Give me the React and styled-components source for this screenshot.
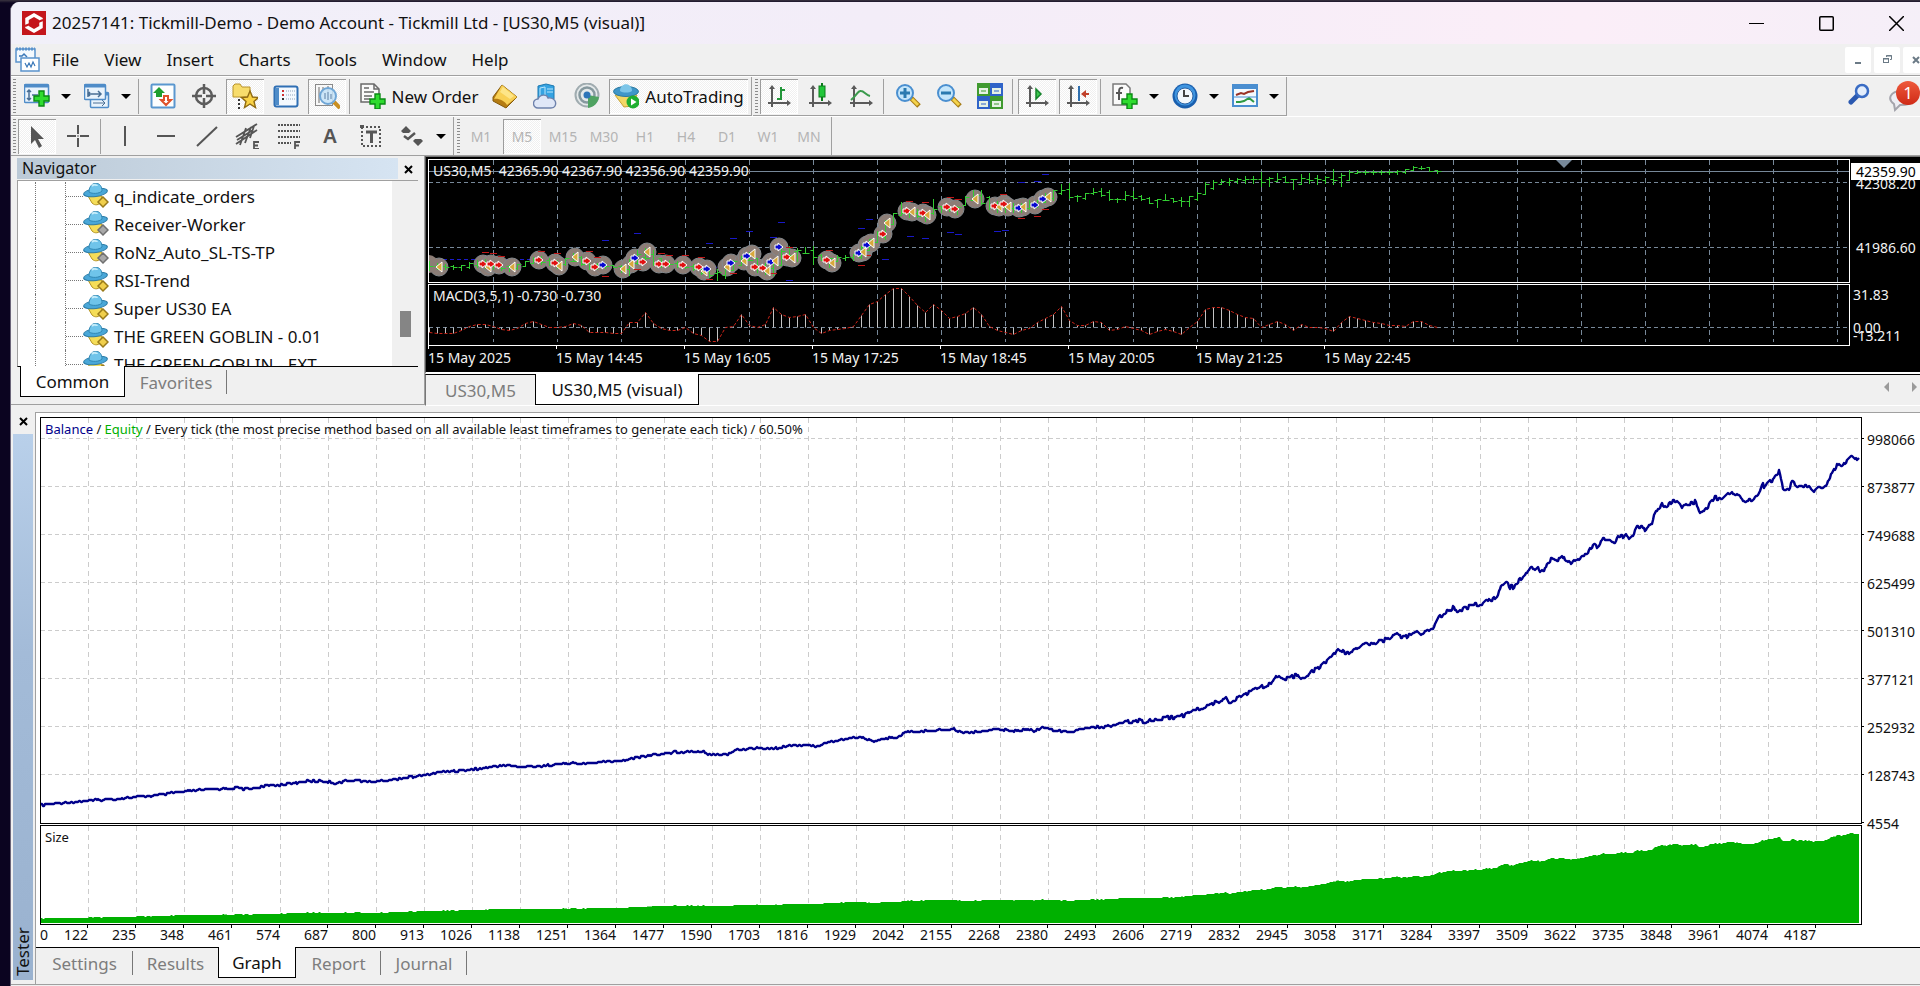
import React from 'react';
import styled, { createGlobalStyle, css } from 'styled-components';

const GlobalStyle = createGlobalStyle`
  * {
    box-sizing: border-box;
  }

  body {
    margin: 0;
    background: #0b0420;
    overflow: hidden;
  }

  button {
    font: inherit;
    color: inherit;
    border: 0;
    padding: 0;
    background: none;
  }
`;

/* ---------- data ---------- */

const menus = ['File', 'View', 'Insert', 'Charts', 'Tools', 'Window', 'Help'];
const timeframes = ['M1', 'M5', 'M15', 'M30', 'H1', 'H4', 'D1', 'W1', 'MN'];

const experts = [
  { name: 'q_indicate_orders', active: true },
  { name: 'Receiver-Worker', active: false },
  { name: 'RoNz_Auto_SL-TS-TP', active: false },
  { name: 'RSI-Trend', active: true },
  { name: 'Super US30 EA', active: true },
  { name: 'THE GREEN GOBLIN - 0.01', active: true },
  { name: 'THE GREEN GOBLIN - EXT', active: true },
];

const dates = [
  '15 May 2025',
  '15 May 14:45',
  '15 May 16:05',
  '15 May 17:25',
  '15 May 18:45',
  '15 May 20:05',
  '15 May 21:25',
  '15 May 22:45',
];

const tradeNumbers = [
  122, 235, 348, 461, 574, 687, 800, 913, 1026, 1138, 1251, 1364, 1477, 1590, 1703, 1816, 1929,
  2042, 2155, 2268, 2380, 2493, 2606, 2719, 2832, 2945, 3058, 3171, 3284, 3397, 3509, 3622, 3735,
  3848, 3961, 4074, 4187,
];

const balances = [998066, 873877, 749688, 625499, 501310, 377121, 252932, 128743, 4554];

// high / low of every bar, three units to a pixel
const bars = [
  [335, 360], [340, 356], [342, 356], [346, 356], [346, 358], [336, 352], [330, 350], [328, 352],
  [336, 356], [340, 358], [345, 362], [342, 356], [333, 348], [322, 338], [318, 342], [326, 345],
  [330, 352], [325, 345], [310, 332], [320, 345], [328, 356], [340, 356], [340, 352], [346, 350],
  [346, 366], [328, 375], [300, 340], [296, 330], [300, 345], [325, 350], [330, 348], [335, 350],
  [340, 354], [344, 358], [350, 372], [355, 380], [357, 390], [350, 382], [332, 360], [318, 345],
  [306, 330], [325, 365], [340, 370], [330, 375], [285, 345], [288, 320], [296, 332], [291, 308],
  [290, 340], [312, 330], [325, 350], [315, 332], [315, 328], [312, 330], [290, 322], [268, 300],
  [245, 275], [210, 265], [190, 222], [158, 195], [178, 200], [178, 200], [185, 212], [148, 190],
  [168, 185], [165, 182], [170, 190], [140, 165], [120, 150], [120, 160], [140, 175], [155, 185],
  [165, 185], [160, 185], [160, 185], [150, 175], [150, 170], [130, 155], [120, 150], [102, 130],
  [100, 142], [137, 152], [130, 146], [116, 130], [116, 136], [121, 148], [146, 154], [125, 148],
  [123, 144], [137, 148], [142, 158], [148, 170], [132, 150], [144, 154], [142, 166], [139, 166],
  [128, 148], [97, 132], [90, 116], [87, 102], [84, 104], [84, 97], [78, 97], [79, 97], [67, 106],
  [83, 108], [70, 92], [79, 95], [88, 116], [72, 101], [70, 97], [76, 101], [78, 97], [58, 101],
  [70, 108], [60, 90], [62, 68], [62, 70], [62, 70], [62, 70], [62, 70], [62, 70], [57, 67],
  [50, 60], [48, 55], [52, 62], [60, 68],
];

const macd = [
  -16, -17, -17, -17, -10, 2, 8, 8, 2, -5, -8, -4, 12, 18, 10, 0, 0, 3, 12, 6, -15, -16, -15, -17,
  -18, 15, 14, 44, 12, -2, -8, -10, 0, -17, -24, -43, -43, 0, 2, 40, 5, 0, 8, 60, 38, 30, 32, 38, 0,
  -17, -8, -6, -4, 4, 36, 68, 77, 98, 117, 117, 92, 66, 44, 68, 50, 28, 32, 42, 60, 38, 2, -10, -16,
  -22, -10, -4, 14, 26, 40, 62, 22, 6, 6, 17, 14, -8, -6, 3, -2, -10, -20, -12, -6, -12, -22, 0, 18,
  54, 60, 60, 50, 40, 30, 26, 0, 8, 17, 8, -8, 8, 0, 0, -4, -12, 15, 32, 26, 22, 14, 12, 6, 5, 4,
  17, 17, 6, 0,
];

// t: trade closed, s: sell, b: buy
const trades = [
  ['t', 11, 108], ['s', 55, 105], ['t', 60, 108], ['s', 63, 105], ['s', 71, 106], ['t', 84, 108],
  ['s', 111, 101], ['s', 127, 104], ['t', 131, 107], ['t', 147, 98], ['s', 159, 102],
  ['s', 167, 108], ['b', 175, 106], ['t', 195, 110], ['t', 203, 105], ['b', 207, 99],
  ['s', 215, 103], ['t', 219, 93], ['s', 231, 105], ['s', 238, 105], ['s', 255, 106],
  ['s', 271, 108], ['t', 276, 112], ['b', 279, 110], ['t', 299, 108], ['b', 303, 104],
  ['t', 316, 102], ['b', 319, 97], ['t', 324, 95], ['s', 327, 108], ['s', 335, 109],
  ['t', 339, 112], ['b', 343, 103], ['t', 347, 102], ['b', 351, 88], ['s', 359, 98],
  ['t', 364, 99], ['s', 399, 101], ['t', 404, 104], ['b', 431, 94], ['t', 435, 93],
  ['b', 439, 86], ['t', 443, 84], ['s', 455, 75], ['t', 459, 64], ['s', 479, 52], ['t', 484, 53],
  ['s', 495, 54], ['t', 499, 56], ['s', 519, 48], ['s', 527, 50], ['t', 547, 40], ['s', 567, 47],
  ['t', 571, 48], ['s', 576, 45], ['t', 580, 48], ['b', 591, 49], ['t', 595, 48], ['b', 607, 46],
  ['b', 615, 40], ['t', 620, 38],
];

const buyStops = [
  [177, 81], [209, 74], [281, 84], [305, 79], [321, 72], [345, 78], [353, 63], [433, 69],
  [441, 60], [457, 100], [482, 77], [361, 121], [497, 79], [522, 73], [530, 75], [569, 72],
  [577, 71], [593, 23], [609, 22], [617, 15],
];

const sellStops = [
  [57, 93], [65, 94], [73, 97], [113, 92], [129, 94], [161, 92], [169, 98], [177, 117],
  [209, 110], [233, 94], [241, 96], [257, 96], [273, 98], [281, 120], [305, 114], [345, 114],
  [361, 88], [401, 91], [433, 106], [439, 96], [481, 42], [497, 43], [522, 38], [530, 40],
  [575, 35], [593, 59], [609, 57], [617, 50],
];

const balanceKnots = [
  [0, 388], [19, 386], [46, 384], [72, 382], [96, 380], [119, 378], [132, 376], [159, 373],
  [192, 371], [207, 372], [232, 368], [249, 367], [266, 364], [282, 364], [294, 366], [312, 363],
  [329, 365], [349, 363], [385, 358], [399, 355], [437, 352], [463, 348], [479, 350], [501, 349],
  [527, 346], [539, 347], [578, 344], [603, 339], [635, 335], [662, 334], [667, 337], [687, 337],
  [696, 333], [715, 331], [731, 332], [750, 328], [775, 329], [798, 323], [818, 320], [833, 324],
  [855, 320], [867, 315], [913, 312], [917, 315], [935, 315], [954, 312], [973, 314], [989, 312],
  [994, 314], [1001, 310], [1011, 313], [1033, 315], [1043, 311], [1063, 310], [1100, 303],
  [1107, 305], [1120, 301], [1139, 300], [1155, 292], [1161, 293], [1174, 285], [1186, 281],
  [1188, 285], [1200, 279], [1216, 271], [1230, 267], [1235, 259], [1242, 264], [1257, 257],
  [1260, 261], [1279, 250], [1292, 238], [1297, 232], [1304, 236], [1311, 234], [1322, 226],
  [1327, 228], [1346, 222], [1355, 217], [1364, 220], [1376, 215], [1380, 218], [1384, 215],
  [1392, 210], [1397, 201], [1406, 194], [1412, 191], [1418, 194], [1431, 188], [1441, 187],
  [1446, 182], [1449, 184], [1455, 181], [1460, 170], [1465, 165], [1469, 170], [1472, 170],
  [1481, 161], [1489, 150], [1494, 153], [1497, 151], [1499, 155], [1504, 152], [1509, 143],
  [1517, 143], [1523, 139], [1526, 144], [1530, 148], [1541, 138], [1546, 137], [1553, 128],
  [1556, 131], [1562, 123], [1569, 123], [1573, 128], [1577, 121], [1586, 117], [1588, 120],
  [1592, 118], [1596, 110], [1604, 112], [1611, 107], [1613, 98], [1621, 86], [1625, 91],
  [1632, 84], [1638, 85], [1642, 90], [1646, 89], [1654, 85], [1659, 95], [1666, 92], [1673, 81],
  [1682, 82], [1687, 77], [1695, 76], [1701, 83], [1711, 84], [1717, 78], [1722, 66], [1723, 71],
  [1727, 65], [1734, 61], [1738, 55], [1742, 72], [1747, 73], [1752, 64], [1756, 70], [1767, 70],
  [1773, 75], [1777, 71], [1785, 70], [1789, 59], [1796, 49], [1801, 50], [1806, 44], [1810, 39],
  [1814, 42], [1817, 40],
];

const noise = (n) => {
  const v = Math.sin(n * 12.9898) * 43758.5453;
  return v - Math.floor(v) - 0.5;
};

const balanceCurve = (() => {
  const points = [];
  let k = 0;
  for (let x = 0; x <= 1818; x += 1) {
    while (k < balanceKnots.length - 2 && x > balanceKnots[k + 1][0]) k += 1;
    const [x0, y0] = balanceKnots[k];
    const [x1, y1] = balanceKnots[k + 1];
    const y = y0 + ((y1 - y0) * (x - x0)) / (x1 - x0);
    const swing = x < 1080 ? 2 : 4;
    points.push([x, Math.round(y - 1 + noise(Math.floor(x / 2)) * swing)]);
  }
  return points;
})();

const polyline = (points) => points.map((p) => p.join(',')).join(' ');
const range = (from, count, step) => Array.from({ length: count }, (_, i) => from + i * step);

/* ---------- icons ---------- */

const Svg = ({ size = 26, children }) => (
  <svg width={size} height={size} viewBox="0 0 26 26" fill="none" aria-hidden="true">
    {children}
  </svg>
);

const Plus = ({ x, y }) => (
  <path
    transform={`translate(${x} ${y})`}
    d="M5 0h5v5h5v5h-5v5H5v-5H0V5h5z"
    fill="#2fdc2f"
    stroke="#0a8a14"
    strokeWidth="1.4"
  />
);

const Pane = ({ x, y, w, h }) => (
  <g transform={`translate(${x} ${y})`}>
    <rect x=".5" y=".5" width={w} height={h} rx="1" fill="#e9f3fc" stroke="#4f8cc8" strokeWidth="1.5" />
    <rect x=".5" y=".5" width={w} height="3" fill="#4f8cc8" />
  </g>
);

const Axes = ({ children }) => (
  <Svg>
    <path d="M6 4v20M2 20h21" stroke="#5a5a5a" strokeWidth="2" />
    <path d="M6 2l-3 4h6zM25 20l-4-3v6z" fill="#5a5a5a" />
    {children}
  </Svg>
);

const Magnifier = ({ minus }) => (
  <Svg>
    <path d="M16 15l8 8" stroke="#a67c14" strokeWidth="5" />
    <path d="M17 16l6 6" stroke="#f4d34c" strokeWidth="3" />
    <circle cx="10" cy="10" r="8" fill="#c5e6fb" stroke="#4a8fd0" strokeWidth="2" />
    <path d={minus ? 'M5 10h10' : 'M5 10h10M10 5v10'} stroke="#2b7ab0" strokeWidth="3" />
  </Svg>
);

const Expert = ({ active }) => (
  <Svg>
    <path d="M5 13l4 7c3 3 7 2 9-1l1-6z" fill="#f5dd58" stroke="#b59422" />
    <ellipse cx="12.500" cy="9.500" rx="12" ry="4" transform="rotate(-8 12.500 9.500)" fill="#49a7d8" stroke="#2f7ea8" />
    <path d="M6 9c0-11 13-12 13-1-3 3-10 3-13 1z" fill="#6fc4ea" stroke="#3288b4" />
    <path d="M9 3c2-2 5-1 5 0" stroke="#c4ecfa" strokeWidth="2" />
    <path d="M20 14l5 5-5 5-5-5z" fill={active ? '#f0cf4c' : '#a8a8a8'} stroke={active ? '#9a7b1a' : '#707070'} strokeWidth="1.500" />
  </Svg>
);

const icons = {
  newChart: (
    <Svg>
      <Pane x={0} y={1} w={24} h={18} />
      <path d="M5 7v10M3 9l2-2 2 2M3 15l2 2 2-2M8 12h6" stroke="#4a6f94" strokeWidth="1.500" />
      <Plus x={10} y={8} />
    </Svg>
  ),
  profiles: (
    <Svg>
      <Pane x={6} y={9} w={18} h={15} />
      <path d="M9 20h12M18 17l3 3-3 3" stroke="#4a6f94" />
      <Pane x={0} y={1} w={21} h={15} />
      <path d="M4 6v8M4 11h13M14 8l3 3-3 3M6 9l-2 2 2 2" stroke="#4a6f94" strokeWidth="1.500" />
    </Svg>
  ),
  market: (
    <Svg>
      <rect x="1.500" y="1.500" width="23" height="23" rx="1" fill="#fdfefe" stroke="#5a97cf" strokeWidth="2" />
      <path d="M9 4l6 6h-3v4H6v-4H3z" fill="#1f9e2f" />
      <path d="M16 22l-5-5h3v-4h4v4h3z" fill="#fff" stroke="#e0522a" strokeWidth="2" />
    </Svg>
  ),
  crosshair: (
    <Svg>
      <circle cx="13" cy="13" r="8" stroke="#5c5c5c" strokeWidth="2.500" />
      <path d="M13 1v10M13 15v10M1 13h10M15 13h10" stroke="#5c5c5c" strokeWidth="2.500" />
    </Svg>
  ),
  navigator: (
    <Svg>
      <path d="M1 14V3l2-2h5l2 3h8v10z" fill="#f7dc6c" stroke="#b8922a" />
      <path d="M7 16v10" stroke="#333" strokeWidth="2" strokeDasharray="2 2" />
      <path d="M18 8l2.500 6 6 .5-4.500 4 1.500 6-5.500-3.500-5.500 3.500 1.500-6-4.500-4 6-.5z" fill="#f9d246" stroke="#8f6a12" strokeWidth="1.400" />
    </Svg>
  ),
  dataWindow: (
    <Svg>
      <rect x="1.500" y="3.500" width="23" height="20" rx="2" fill="#f4f9fe" stroke="#2f6fb4" strokeWidth="2" />
      <path d="M4 5v17" stroke="#4f8cc8" strokeWidth="4" />
      <path d="M9 8h2M9 12h2" stroke="#d03030" strokeWidth="2" />
      <path d="M9 16h2" stroke="#333" strokeWidth="2" />
      <path d="M13 8h10M13 12h10M13 16h10" stroke="#8fa4bc" strokeDasharray="1 1" />
    </Svg>
  ),
  tester: (
    <Svg>
      <rect x="1.500" y="1.500" width="17" height="21" fill="#f8f8f8" stroke="#8a8a8a" />
      <path d="M5 4v16M9 4v6M14 3v6" stroke="#6d6d6d" />
      <path d="M20 19l6 6" stroke="#c98f22" strokeWidth="4" />
      <circle cx="14" cy="13" r="8" fill="#c6e3f8" fillOpacity=".85" stroke="#6fa6d6" strokeWidth="2" />
      <path d="M11 16v-6M14 9v8M17 11v5" stroke="#5d7fa2" />
    </Svg>
  ),
  newOrder: (
    <Svg>
      <path d="M1 1h13l5 5v13H1z" fill="#fafafa" stroke="#6a6a6a" strokeWidth="1.500" />
      <path d="M14 1v5h5M4 5h5M4 9h10M4 13h8M4 16h6" stroke="#6a6a6a" strokeWidth="1.500" />
      <Plus x={10} y={11} />
    </Svg>
  ),
  editor: (
    <Svg>
      <path d="M1 14L10 2l15 12-11 11L1 18z" fill="#b57c12" stroke="#845a0c" />
      <path d="M10 2l15 12-10 8c-2-4-9-7-13-6z" fill="#f8d055" />
      <path d="M11 4l11 9-4 3L8 9z" fill="#fde588" />
    </Svg>
  ),
  vps: (
    <Svg>
      <path d="M5 3l8-2 8 2v13H5z" fill="#35a3e2" stroke="#1b77b0" />
      <path d="M7 5l5-1v11H7zM14 6h6M14 9h6" stroke="#b9e5fb" />
      <path d="M5 25a4.500 4.500 0 010-9c2-5 9-5 10-1 6-1 9 4 7 8-1 2-2 2-4 2z" fill="#dfe7f7" stroke="#6e82ac" strokeWidth="1.400" />
    </Svg>
  ),
  signals: (
    <Svg>
      <circle cx="13" cy="12" r="11.500" fill="#e4e9ea" stroke="#a0acb0" strokeWidth="2" />
      <circle cx="13" cy="12" r="7.500" stroke="#86999f" strokeWidth="2.500" />
      <path d="M14 12l11 2c-1 6-5 10-11 11z" fill="#4fa362" />
      <circle cx="13" cy="12" r="3.500" fill="#2e75b8" />
    </Svg>
  ),
  auto: (
    <Svg>
      <path d="M2 12l9 12 8-1 5-11z" fill="#f3d765" stroke="#c7a233" />
      <ellipse cx="13" cy="8.500" rx="12.500" ry="5" fill="#3f97c9" stroke="#2b789f" />
      <path d="M7 8c0-9 12-9 12 0-3 2-9 2-12 0z" fill="#7cc5e8" />
      <circle cx="20" cy="19" r="6.500" fill="#1fae30" />
      <path d="M18 15.500l5.500 3.500-5.500 3.500z" fill="#fff" />
    </Svg>
  ),
  bars: (
    <Axes>
      <path d="M11 16h4V4M15 7h4" stroke="#23963a" strokeWidth="2" />
    </Axes>
  ),
  candles: (
    <Axes>
      <path d="M15 0v18" stroke="#0b7a1b" strokeWidth="2" />
      <rect x="12" y="3" width="6" height="11" fill="#22c63a" stroke="#0b7a1b" />
    </Axes>
  ),
  line: (
    <Axes>
      <path d="M3 17c6-5 7-10 10-9 3 0 5 4 9 5" stroke="#3a9a4c" strokeWidth="2" />
    </Axes>
  ),
  zoomIn: <Magnifier />,
  zoomOut: <Magnifier minus />,
  tile: (
    <Svg>
      {[[0, 0, '#3f9a2f'], [13, 0, '#2f63c8'], [0, 13, '#2f63c8'], [13, 13, '#3f9a2f']].map(([x, y, c]) => (
        <g key={`${x}-${y}`} transform={`translate(${x} ${y})`}>
          <rect width="13" height="13" fill={c} />
          <rect x="2" y="5" width="9" height="6" fill="#e6f2e4" />
          <path d="M4 8h5" stroke={c} />
        </g>
      ))}
    </Svg>
  ),
  scroll: (
    <Axes>
      <path d="M12 6l5 5-5 5z" fill="#3cc94f" stroke="#14832a" strokeWidth="1.500" />
    </Axes>
  ),
  shift: (
    <Axes>
      <path d="M14 3v15" stroke="#2f6fae" strokeWidth="2" />
      <path d="M16 11l5-4v3h3v2h-3v3z" fill="#c1402a" />
    </Axes>
  ),
  indicators: (
    <Svg>
      <path d="M1 1h13l4 4v17H1z" fill="#fafafa" stroke="#7a7a7a" strokeWidth="1.500" />
      <path d="M11 5c-4-1-4 2-4 5v7M4 10h6" stroke="#555" strokeWidth="2" />
      <Plus x={10} y={11} />
    </Svg>
  ),
  periods: (
    <Svg>
      <circle cx="13" cy="13" r="12.500" fill="#1a5fae" />
      <circle cx="13" cy="12" r="10.500" fill="#3f95e0" />
      <circle cx="13" cy="13" r="8" fill="#f2f7fc" stroke="#2a62a4" />
      <path d="M12 7v6h5" stroke="#444" strokeWidth="2" />
    </Svg>
  ),
  templates: (
    <Svg>
      <rect x="1" y="2" width="24" height="21" fill="#f4f9fe" stroke="#4a8ed0" strokeWidth="2" />
      <path d="M1 4h24" stroke="#4a8ed0" strokeWidth="4" />
      <path d="M4 12l5-2 3 1 4-2 6-1" stroke="#9a3226" strokeWidth="2" />
      <path d="M4 19h4l4-1 5-3 5 4" stroke="#2f9a44" strokeWidth="2" />
      <path d="M2 14h22" stroke="#4a8ed0" />
    </Svg>
  ),
  cursor: (
    <Svg>
      <path d="M7 3v18l4-4 4 8 3-2-4-7h6z" fill="#555" />
    </Svg>
  ),
  cross: (
    <Svg>
      <path d="M13 2v9M13 15v9M2 13h9M15 13h9" stroke="#555" strokeWidth="2" />
      <path d="M12 13h2" stroke="#555" />
    </Svg>
  ),
  vline: (
    <Svg>
      <path d="M13 3v20" stroke="#555" strokeWidth="2" />
    </Svg>
  ),
  hline: (
    <Svg>
      <path d="M4 13h18" stroke="#555" strokeWidth="2" />
    </Svg>
  ),
  trend: (
    <Svg>
      <path d="M3 23L23 4" stroke="#555" strokeWidth="2" />
    </Svg>
  ),
  channel: (
    <Svg>
      <path d="M1 14L22 1M1 21L22 7M2 17L18 7M5 22l6-17M10 20l6-16M15 15l4-12" stroke="#555" strokeWidth="1.800" />
      <path d="M24 19h-5v7h5M19 22.500h4" stroke="#555" strokeWidth="1.800" />
    </Svg>
  ),
  fibo: (
    <Svg>
      <path d="M2 2h22M2 8h22M2 14h22M2 20h13" stroke="#555" strokeWidth="2" strokeDasharray="2 1" />
      <path d="M24 19h-5v8M19 22.500h4" stroke="#555" strokeWidth="1.800" />
    </Svg>
  ),
  label: (
    <Svg>
      <rect x="4" y="4" width="18" height="19" stroke="#555" strokeWidth="2" strokeDasharray="2 2" />
      <path d="M8 9h11M13.500 9v11" stroke="#555" strokeWidth="3" />
      <path d="M2 2h4v3H2z" fill="#555" />
    </Svg>
  ),
  arrows: (
    <Svg>
      <path d="M7 3l5 5-2 2H4L2 8zM19 23l-5-5 2-2h6l2 2z" fill="#555" />
      <path d="M5 13l4 3 7-6" stroke="#555" strokeWidth="2.500" />
    </Svg>
  ),
};

/* ---------- window ---------- */

const Desktop = styled.div`
  min-height: 100vh;
  padding: 2px 0 0 10px;
  background: linear-gradient(#3a3440, #0b0420 3px);
  font-family: 'Noto Sans', 'Open Sans', sans-serif;
  font-size: 17px;
  color: #111;
`;

const AppWindow = styled.div`
  min-height: calc(100vh - 2px);
  display: flex;
  flex-direction: column;
  border-left: 1px solid #6a6478;
  border-top-left-radius: 9px;
  background: #f0f0f0;
  overflow: hidden;
`;

const TitleBar = styled.header`
  height: 42px;
  display: flex;
  align-items: center;
  gap: 6px;
  margin-right: -8px;
  padding-left: 11px;
  background: linear-gradient(90deg, #f1f0f9, #f3edf8 45%, #fbeef8 82%, #f5eff8);
`;

const Title = styled.h1`
  flex: 1;
  margin: 0;
  font-size: 17px;
  font-weight: 400;
  line-height: 22px;
  white-space: nowrap;
`;

const WindowButton = styled.button`
  width: 64px;
  height: 40px;
  display: grid;
  place-items: center;
`;

const MenuBar = styled.nav`
  height: 32px;
  display: flex;
  align-items: center;
  padding-left: 4px;
  border-bottom: 1px solid #a0a0a0;
`;

const MenuList = styled.div`
  flex: 1;
  display: flex;
  gap: 25px;
  padding-left: 12px;
`;

const MdiButtons = styled.div`
  display: flex;
  gap: 3px;
  margin-right: -9px;
`;

const MdiButton = styled.button`
  width: 26px;
  height: 26px;
  display: grid;
  place-items: center;
  border-radius: 2px;
  background: #fff;
`;

const ToolbarRow = styled.div`
  height: 40px;
  display: flex;
  border-top: 1px solid #fff;
  border-bottom: ${({ $last }) => ($last ? '1px solid #a0a0a0' : '0')};
`;

const ToolGroup = styled.div`
  display: flex;
  align-items: center;
  gap: 3px;
  padding: 0 3px 0 2px;
  margin-right: 1px;
  border-right: 1px solid #a0a0a0;
  border-bottom: ${({ $last }) => ($last ? '0' : '1px solid #a0a0a0')};
`;

const Gripper = styled.span`
  width: 3px;
  height: 34px;
  margin-right: -1px;
  background: repeating-linear-gradient(#8c8c8c 0 1px, #f0f0f0 1px 3px);
`;

const Separator = styled.span`
  width: 3px;
  height: 35px;
  border-left: 1px solid #a0a0a0;
`;

const hatch = css`
  background: repeating-conic-gradient(#fff 0 25%, #f0f0f0 0 50%) 0 0 / 2px 2px;
  box-shadow: inset 1px 1px #9c9c9c, inset -1px -1px #fff;
`;

const ToolButton = styled.button`
  width: ${({ $width }) => $width || 38}px;
  height: 35px;
  display: flex;
  align-items: center;
  justify-content: center;
  gap: 6px;
  white-space: nowrap;
  ${({ $pressed }) => $pressed && hatch}
`;

const Caret = styled.button`
  width: 19px;
  height: 35px;
  margin-left: -3px;
  display: grid;
  place-items: center;

  &::before {
    content: '';
    border: 5px solid transparent;
    border-top-color: #000;
    border-bottom: 0;
  }
`;

const Timeframe = styled(ToolButton)`
  font-size: 14px;
  color: #b4b4b4;
`;

const LetterTool = styled(ToolButton)`
  font-family: 'Liberation Sans', sans-serif;
  font-size: 20px;
  font-weight: 700;
  color: #555;
`;

const ToolbarEnd = styled.div`
  margin-left: auto;
  display: flex;
  align-items: center;
  gap: 18px;
`;

const Chat = styled.button`
  position: relative;
  width: 32px;
  height: 36px;
`;

const Badge = styled.span`
  position: absolute;
  top: 2px;
  right: 0;
  width: 24px;
  height: 24px;
  border-radius: 50%;
  background: linear-gradient(#ee5a3c, #cf2a16);
  color: #fff;
  font-size: 17px;
  line-height: 24px;
  text-align: center;
`;

/* ---------- navigator ---------- */

const Workspace = styled.div`
  display: flex;
  height: 256px;
`;

const NavigatorPanel = styled.aside`
  width: 414px;
  display: flex;
  flex-direction: column;
  padding: 2px 6px 7px 6px;
  border-right: 1px solid #a0a0a0;
  border-bottom: 1px solid #a0a0a0;
  height: 249px;
`;

const PanelHeader = styled.div`
  display: flex;
  height: 23px;
`;

const PanelTitle = styled.h2`
  flex: 1;
  margin: 0;
  padding-left: 5px;
  font-size: 16px;
  font-weight: 400;
  line-height: 20px;
  background: linear-gradient(90deg, #bccad7, #d6e4f2);
  border-bottom: 1px solid #f0f0f0;
`;

const CloseButton = styled.button`
  width: ${({ $width }) => $width}px;
  height: ${({ $height }) => $height}px;
  display: grid;
  place-items: center;
`;

const Tree = styled.div`
  display: flex;
  height: 187px;
  border-top: 1px solid #a0a0a0;
  border-left: 1px solid #a0a0a0;
  border-bottom: 1px solid #000;
  background: #fff;
`;

const TreeList = styled.ul`
  flex: 1;
  margin: 0;
  padding: 1px 0 0 17px;
  list-style: none;
  overflow: hidden;
`;

const TreeItem = styled.li`
  display: flex;
  align-items: center;
  height: 28px;
  padding-left: 29px;
  border-left: 1px dotted #777;
  white-space: nowrap;

  &::before {
    content: '';
    align-self: stretch;
    width: 17px;
    background: repeating-linear-gradient(90deg, #777 0 1px, transparent 1px 2px) 0 14px / 100% 1px no-repeat;
    border-left: 1px dotted #777;
  }

  svg {
    margin-right: 5px;
  }
`;

const ScrollTrack = styled.div`
  width: 26px;
  padding: 130px 0 0 8px;
  background: #f0f0f0;

  &::before {
    content: '';
    display: block;
    width: 11px;
    height: 26px;
    background: #858585;
  }
`;

/* ---------- tabs ---------- */

const Tabs = styled.div`
  display: flex;
  height: ${({ $height }) => $height}px;
  padding-left: ${({ $inset }) => $inset || 0}px;
`;

const Tab = styled.button`
  width: ${({ $width }) => $width}px;
  height: 30px;
  color: ${({ $active }) => ($active ? '#111' : '#7d7d7d')};
  ${({ $active }) =>
    $active
      ? css`
          margin-top: -1px;
          height: 31px;
          border: 1px solid #000;
          border-top: 0;
          background: #fff;
        `
      : css`
          background: linear-gradient(#777, #777) 100% 50% / 1px 24px no-repeat;
        `}
`;

const PlainTab = styled(Tab)`
  background: none;
`;

/* ---------- price chart ---------- */

const ChartPanel = styled.section`
  flex: 1;
  min-width: 0;
  display: flex;
  flex-direction: column;
`;

const ChartBody = styled.div`
  height: 218px;
  display: grid;
  grid-template-columns: 1fr 70px;
  grid-template-rows: 125px 62px 26px;
  padding: 2px 0 0 2px;
  background: #000;
  border-left: 1px solid #555;
  border-top: 1px solid #777;
  border-bottom: 2px solid #fff;
  color: #f2f2f2;
  font-size: 14px;
`;

const ChartPane = styled.div`
  position: relative;
  height: ${({ $height }) => $height}px;
  border: 1px solid #fff;
  overflow: hidden;

  svg {
    display: block;
  }
`;

const PaneCaption = styled.p`
  position: absolute;
  top: 1px;
  left: 4px;
  margin: 0;
  line-height: 20px;
  white-space: pre;
`;

const PriceAxis = styled.div`
  position: relative;
`;

const PriceLabel = styled.span`
  position: absolute;
  top: ${({ $top }) => $top}px;
  left: 0;
  right: 0;
  padding-left: ${({ $inset }) => $inset}px;
  line-height: 17px;
  ${({ $current }) => $current && 'background: #fff; color: #000; left: 1px; padding-left: 5px; z-index: 1;'}
`;

const DateAxis = styled.div`
  display: flex;
`;

const DateLabel = styled.span`
  flex: none;
  width: 128px;
  line-height: 24px;
  white-space: nowrap;
  background: linear-gradient(#fff, #fff) 0 0 / 1px 3px no-repeat;
`;

const ChartTabs = styled.div`
  display: flex;
  justify-content: space-between;
  height: 32px;
  border-top: 1px solid #000;
  border-bottom: 1px solid #fff;
  border-left: 1px solid #777;
`;

const Pager = styled.div`
  display: flex;
  gap: 23px;
  padding: 7px 3px 0 0;
`;

const PagerButton = styled.button`
  height: 10px;
  border: 5px solid transparent;
  border-${({ $side }) => $side}-width: 0;
  border-${({ $side }) => ($side === 'left' ? 'right' : 'left')}-color: #9a9a9a;

  &:focus-visible {
    outline: 1px dotted #000;
  }
`;

/* ---------- tester ---------- */

const Tester = styled.section`
  flex: 1;
  display: flex;
  border-bottom: 1px solid #a0a0a0;
`;

const TesterRail = styled.div`
  width: 24px;
  display: flex;
  flex-direction: column;
  padding: 0 2px 4px 2px;
`;

const RailTitle = styled.h2`
  flex: 1;
  margin: 4px 0 0;
  padding-top: 4px;
  writing-mode: vertical-rl;
  transform: rotate(180deg);
  font-size: 17px;
  font-weight: 400;
  line-height: 20px;
  background: linear-gradient(#9ab2cf, #a3bbd8 60%, #b9d0ea);
`;

const TesterContent = styled.div`
  flex: 1;
  min-width: 0;
  border-top: 1px solid #a0a0a0;
  border-left: 1px solid #a0a0a0;
`;

const Graph = styled.div`
  display: grid;
  grid-template-columns: 1fr 58px;
  padding: 4px 0 0 4px;
  background: #fff;
  border-bottom: 1px solid #000;
  font-size: 14px;
`;

const GraphPlots = styled.div`
  min-width: 0;
  display: flex;
  flex-direction: column;
  gap: 1px;
`;

const GraphPane = styled.div`
  position: relative;
  height: ${({ $height }) => $height}px;
  border: 1px solid #000;
  overflow: hidden;

  svg {
    display: block;
  }
`;

const GraphCaption = styled(PaneCaption)`
  font-size: 13px;
`;

const Colored = styled.span`
  color: ${({ $color }) => $color};
`;

const ValueAxis = styled.div`
  height: 507px;
`;

const ValueLabel = styled.div`
  display: flex;
  gap: 3px;
  height: 48px;
  line-height: 46px;

  &::before {
    content: '';
    width: 2px;
    height: 1px;
    margin-top: 21px;
    background: #000;
  }
`;

const TradeAxis = styled.div`
  display: flex;
  height: 22px;
  line-height: 20px;
`;

const TradeLabel = styled.span`
  flex: none;
  width: 48px;
  display: flex;
  justify-content: space-between;
  background: linear-gradient(#000, #000) 100% 0 / 1px 3px no-repeat;

  b {
    margin-left: auto;
    font-weight: 400;
  }
`;

const StatusEdge = styled.div`
  height: 1px;
`;

/* ---------- drawings ---------- */

const PriceChart = () => {
  const top = (v) => v / 3 - 10;
  const middle = ([high, low]) => (top(high) + top(low)) / 2;
  return (
    <svg width="100%" height="122">
      <g stroke="#778899" strokeDasharray="5 4">
        {range(64.5, 28, 64).map((x) => (
          <path key={x} d={`M${x} 0V122`} />
        ))}
        <path d="M0 22.500H4000M0 87.500H4000" strokeDasharray="4 3" />
      </g>
      <path d="M0 11.500H4000" stroke="#778899" />
      <path d="M1127 0h16l-8 8z" fill="#778899" />
      <path d="M0 99.500H142M158 106H200M270 109L300 106" stroke="#1c1ccc" strokeDasharray="4 3" />
      {trades.map(([kind, x, y]) => (
        <circle key={`${kind}${x}`} cx={x - 1} cy={y - 1} r="9" fill="#8c7d76" stroke="#83888c" />
      ))}
      <circle cx="0" cy="104" r="9" fill="#8c7d76" />
      <g stroke="#32cd32" strokeWidth="1">
        {bars.map((bar, i) => {
          const x = 0.5 + i * 8;
          const open = i ? middle(bars[i - 1]) : middle(bar);
          const high = top(bar[0]);
          const low = top(bar[1]);
          const from = Math.round(Math.min(Math.max(open, high), low)) + 0.5;
          const to = Math.round(Math.min(Math.max(middle(bars[i + 1] || bar), high), low)) + 0.5;
          return <path key={x} d={`M${x} ${Math.floor(high)}V${Math.ceil(low) + 1}M${x - 3} ${from}h3M${x} ${to}h4`} />;
        })}
      </g>
      <path
        d={buyStops.map(([x, y]) => `M${x - 4} ${y - 0.5}h7`).join('')}
        stroke="#1818c8"
      />
      <path
        d={sellStops.map(([x, y]) => `M${x - 4} ${y - 0.5}h7`).join('')}
        stroke="#c01818"
      />
      {trades.map(([kind, x, y]) =>
        kind === 't' ? (
          <path key={`${kind}${x}`} d={`M${x - 4} ${y - 1}l6-5v10z`} fill="#d8a83c" stroke="#fff" />
        ) : (
          <path
            key={`${kind}${x}`}
            d={`M${x - 5} ${y - 3}h3v-2l5 4-5 4v-2h-3z`}
            fill={kind === 's' ? '#e01010' : '#0808d0'}
            stroke="#fff"
            strokeWidth="1"
          />
        )
      )}
    </svg>
  );
};

const MacdChart = () => (
  <svg width="100%" height="60">
    <g stroke="#778899">
      {range(64.5, 28, 64).map((x) => (
        <path key={x} d={`M${x} 0V57`} strokeDasharray="5 4" />
      ))}
      <path d="M0 42.500H4000" strokeDasharray="4 3" />
    </g>
    <g stroke="#c4c4c4">
      {macd.map((value, i) => (
        <path key={i} d={`M${0.5 + i * 8} 42.500v${-Math.round(value / 3)}`} />
      ))}
    </g>
    <polyline
      points={polyline(macd.map((value, i) => [0.5 + i * 8, 42.5 - Math.round(value / 3)]))}
      fill="none"
      stroke="#cc2418"
      strokeDasharray="3 2"
    />
  </svg>
);

const GraphGrid = ({ height, rows }) => (
  <g stroke="#cccccc">
    {range(47.5, 50, 48).map((x) => (
      <path key={x} d={`M${x} 0V${height}`} strokeDasharray="5 4" />
    ))}
    {rows && range(20.5, 8, 48).map((y) => <path key={y} d={`M0 ${y}H4000`} strokeDasharray="4 3" />)}
  </g>
);

const BalanceChart = () => (
  <svg width="100%" height="405">
    <GraphGrid height={405} rows />
    <polyline
      points={polyline(balanceCurve)}
      fill="none"
      stroke="#00008b"
      strokeWidth="2.4"
      strokeLinejoin="round"
    />
  </svg>
);

const SizeChart = () => (
  <svg width="100%" height="98">
    <GraphGrid height={98} />
    <path
      d={`M0 97${balanceCurve.map(([x, y]) => `L${x} ${97 - Math.round((405 - y) * 0.245)}`).join('')}L1818 97z`}
      fill="#00b000"
    />
  </svg>
);

const CloseGlyph = () => (
  <svg width="9" height="9" viewBox="0 0 9 9" aria-hidden="true">
    <path d="M1 1l7 7M8 1L1 8" stroke="#000" strokeWidth="2" />
  </svg>
);

/* ---------- page ---------- */

const Tool = ({ icon, label, pressed }) => (
  <ToolButton $pressed={pressed} aria-label={label} aria-pressed={pressed}>
    {icons[icon]}
  </ToolButton>
);

const Header = () => (
  <>
    <TitleBar>
      <svg width="24" height="24" viewBox="0 0 24 24" aria-hidden="true">
        <rect width="24" height="24" fill="#c4161c" />
        <path d="M12 4l7 4v8l-7 4-7-4V8z" fill="#c4161c" stroke="#fff" strokeWidth="3.500" />
        <path d="M3 15l5-2M21 9l-5 2" stroke="#c4161c" strokeWidth="2" />
        <circle cx="12" cy="12" r="2.500" fill="#c4161c" />
      </svg>
      <Title>20257141: Tickmill-Demo - Demo Account - Tickmill Ltd - [US30,M5 (visual)]</Title>
      <WindowButton aria-label="Minimize">
        <svg width="15" height="15"><path d="M0 7.500h15" stroke="#000" /></svg>
      </WindowButton>
      <WindowButton aria-label="Maximize">
        <svg width="15" height="15"><rect x=".75" y=".75" width="13.500" height="13.500" rx="1" fill="none" stroke="#000" strokeWidth="1.500" /></svg>
      </WindowButton>
      <WindowButton aria-label="Close">
        <svg width="15" height="15"><path d="M0 0l15 15M15 0L0 15" stroke="#000" strokeWidth="1.500" /></svg>
      </WindowButton>
    </TitleBar>
    <MenuBar>
      <svg width="25" height="25" viewBox="0 0 25 25" fill="none" aria-hidden="true">
        <rect x="1" y="2" width="19" height="13" fill="#f3f9fe" stroke="#5a93cc" strokeWidth="1.500" />
        <path d="M1 2h19" stroke="#5a93cc" strokeWidth="3" strokeDasharray="2 1" />
        <path d="M4 9h3l2-2 3 3" stroke="#3a78b8" strokeWidth="1.500" />
        <rect x="6" y="11" width="18" height="13" fill="#fff" stroke="#5a93cc" strokeWidth="1.500" />
        <path d="M10 16l2 4 2-4 2 4 2-5 2 4" stroke="#3a78b8" strokeWidth="1.200" />
      </svg>
      <MenuList>
        {menus.map((menu) => (
          <button key={menu}>{menu}</button>
        ))}
      </MenuList>
      <MdiButtons>
        <MdiButton aria-label="Minimize chart">
          <svg width="8" height="8"><path d="M1 7h6" stroke="#6b7a86" strokeWidth="2" /></svg>
        </MdiButton>
        <MdiButton aria-label="Restore chart">
          <svg width="9" height="9" fill="none" stroke="#6b7a86"><path d="M3.500 2V.5h5v4H7M3 1h6M1 4h5" /><rect x=".5" y="3.500" width="5" height="4" /></svg>
        </MdiButton>
        <MdiButton aria-label="Close chart">
          <svg width="8" height="8"><path d="M1 1l6 6M7 1L1 7" stroke="#6b7a86" strokeWidth="2" /></svg>
        </MdiButton>
      </MdiButtons>
    </MenuBar>
  </>
);

const Toolbars = () => (
  <>
    <ToolbarRow>
      <ToolGroup>
        <Gripper />
        <Tool icon="newChart" label="New chart" />
        <Caret aria-label="New chart list" />
        <Tool icon="profiles" label="Profiles" />
        <Caret aria-label="Profile list" />
        <Separator />
        <Tool icon="market" label="Market Watch" />
        <Tool icon="crosshair" label="Data window" />
        <Tool icon="navigator" label="Navigator" pressed />
        <Tool icon="dataWindow" label="Terminal" />
        <Tool icon="tester" label="Strategy Tester" pressed />
        <Separator />
        <ToolButton $width={128}>
          {icons.newOrder}
          New Order
        </ToolButton>
        <Tool icon="editor" label="MetaEditor" />
        <Tool icon="vps" label="Virtual hosting" />
        <Tool icon="signals" label="Signals" />
        <ToolButton $width={139} $pressed>
          {icons.auto}
          AutoTrading
        </ToolButton>
      </ToolGroup>
      <ToolGroup>
        <Gripper />
        <Tool icon="bars" label="Bar chart" pressed />
        <Tool icon="candles" label="Candlesticks" />
        <Tool icon="line" label="Line chart" />
        <Separator />
        <Tool icon="zoomIn" label="Zoom in" />
        <Tool icon="zoomOut" label="Zoom out" />
        <Tool icon="tile" label="Tile windows" />
        <Separator />
        <Tool icon="scroll" label="Auto scroll" pressed />
        <Tool icon="shift" label="Chart shift" pressed />
        <Separator />
        <Tool icon="indicators" label="Indicators" />
        <Caret aria-label="Indicator list" />
        <Tool icon="periods" label="Periods" />
        <Caret aria-label="Period list" />
        <Tool icon="templates" label="Templates" />
        <Caret aria-label="Template list" />
      </ToolGroup>
      <ToolbarEnd>
        <button aria-label="Search">
          <svg width="22" height="22" fill="none" aria-hidden="true">
            <path d="M3 19l8-8" stroke="#2a58b0" strokeWidth="5" strokeLinecap="round" />
            <circle cx="14" cy="8" r="6" fill="#e4eefc" stroke="#3a6cc4" strokeWidth="2.500" />
          </svg>
        </button>
        <Chat aria-label="Notifications">
          <svg width="32" height="36" viewBox="0 0 32 36" aria-hidden="true">
            <path d="M14 12c-12 0-15 8-8 13l1 6 5-5c6 0 12-1 14-5l-4-9z" fill="#eeeef4" stroke="#a4a4ac" strokeWidth="2" />
          </svg>
          <Badge>1</Badge>
        </Chat>
      </ToolbarEnd>
    </ToolbarRow>
    <ToolbarRow $last>
      <ToolGroup $last>
        <Gripper />
        <Tool icon="cursor" label="Cursor" pressed />
        <Tool icon="cross" label="Crosshair" />
        <Separator />
        <Tool icon="vline" label="Vertical line" />
        <Tool icon="hline" label="Horizontal line" />
        <Tool icon="trend" label="Trendline" />
        <Tool icon="channel" label="Equidistant channel" />
        <Tool icon="fibo" label="Fibonacci retracement" />
        <LetterTool>A</LetterTool>
        <Tool icon="label" label="Text label" />
        <Tool icon="arrows" label="Arrows" />
        <Caret aria-label="Arrow list" />
      </ToolGroup>
      <ToolGroup $last>
        <Gripper />
        {timeframes.map((name) => (
          <Timeframe key={name} $pressed={name === 'M5'}>
            {name}
          </Timeframe>
        ))}
      </ToolGroup>
    </ToolbarRow>
  </>
);

const Navigator = () => (
  <NavigatorPanel>
    <PanelHeader>
      <PanelTitle>Navigator</PanelTitle>
      <CloseButton $width={20} $height={22} aria-label="Close navigator">
        <CloseGlyph />
      </CloseButton>
    </PanelHeader>
    <Tree>
      <TreeList>
        {experts.map((expert) => (
          <TreeItem key={expert.name}>
            <Expert active={expert.active} />
            {expert.name}
          </TreeItem>
        ))}
      </TreeList>
      <ScrollTrack />
    </Tree>
    <Tabs $height={30} $inset={3}>
      <Tab $active $width={105}>Common</Tab>
      <Tab $width={102}>Favorites</Tab>
    </Tabs>
  </NavigatorPanel>
);

const Chart = () => (
  <ChartPanel>
    <ChartBody>
      <ChartPane $height={124}>
        <PriceChart />
        <PaneCaption>US30,M5  42365.90 42367.90 42356.90 42359.90</PaneCaption>
      </ChartPane>
      <PriceAxis>
        <PriceLabel $top={4} $current>42359.90</PriceLabel>
        <PriceLabel $top={16} $inset={6}>42308.20</PriceLabel>
        <PriceLabel $top={80} $inset={6}>41986.60</PriceLabel>
      </PriceAxis>
      <ChartPane $height={62}>
        <MacdChart />
        <PaneCaption>MACD(3,5,1) -0.730 -0.730</PaneCaption>
      </ChartPane>
      <PriceAxis>
        <PriceLabel $top={2} $inset={3}>31.83</PriceLabel>
        <PriceLabel $top={35} $inset={3}>0.00</PriceLabel>
        <PriceLabel $top={43} $inset={3}>-13.211</PriceLabel>
      </PriceAxis>
      <DateAxis>
        {dates.map((date) => (
          <DateLabel key={date}>{date}</DateLabel>
        ))}
      </DateAxis>
    </ChartBody>
    <ChartTabs>
      <Tabs $height={30}>
        <PlainTab $width={109}>US30,M5</PlainTab>
        <Tab $active $width={164}>US30,M5 (visual)</Tab>
      </Tabs>
      <Pager>
        <PagerButton $side="left" aria-label="Previous chart" />
        <PagerButton $side="right" aria-label="Next chart" />
      </Pager>
    </ChartTabs>
  </ChartPanel>
);

const TesterPanel = () => (
  <Tester>
    <TesterRail>
      <CloseButton $width={20} $height={18} aria-label="Close tester">
        <CloseGlyph />
      </CloseButton>
      <RailTitle>Tester</RailTitle>
    </TesterRail>
    <TesterContent>
      <Graph>
        <GraphPlots>
          <GraphPane $height={407}>
            <BalanceChart />
            <GraphCaption>
              <Colored $color="#00008b">Balance</Colored> / <Colored $color="#00b000">Equity</Colored> / Every tick (the
              most precise method based on all available least timeframes to generate each tick) / 60.50%
            </GraphCaption>
          </GraphPane>
          <GraphPane $height={100}>
            <SizeChart />
            <GraphCaption>Size</GraphCaption>
          </GraphPane>
        </GraphPlots>
        <ValueAxis>
          {balances.map((value) => (
            <ValueLabel key={value}>{value}</ValueLabel>
          ))}
        </ValueAxis>
        <TradeAxis>
          {tradeNumbers.map((value, i) => (
            <TradeLabel key={value}>
              {i === 0 && <span>0</span>}
              <b>{value}</b>
            </TradeLabel>
          ))}
        </TradeAxis>
      </Graph>
      <Tabs $height={31}>
        <Tab $width={97}>Settings</Tab>
        <PlainTab $width={85}>Results</PlainTab>
        <Tab $active $width={78}>Graph</Tab>
        <Tab $width={85}>Report</Tab>
        <Tab $width={86}>Journal</Tab>
      </Tabs>
    </TesterContent>
  </Tester>
);

const App = () => (
  <Desktop>
    <GlobalStyle />
    <AppWindow>
      <Header />
      <Toolbars />
      <Workspace>
        <Navigator />
        <Chart />
      </Workspace>
      <TesterPanel />
      <StatusEdge />
    </AppWindow>
  </Desktop>
);

export default App;
